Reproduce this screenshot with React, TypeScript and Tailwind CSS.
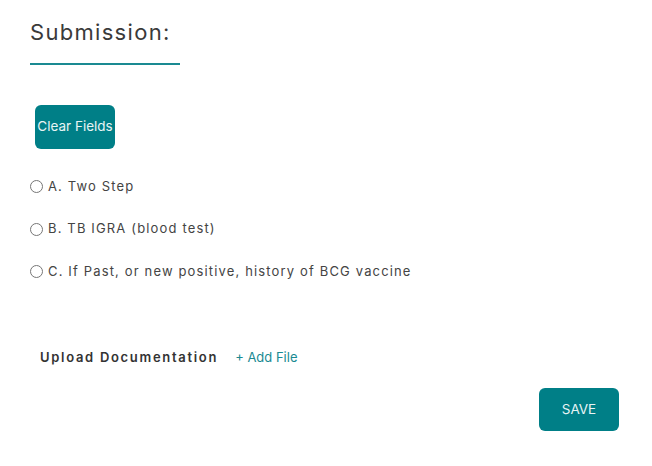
export default function App() {
  const options = [
    'A. Two Step',
    'B. TB IGRA (blood test)',
    'C. If Past, or new positive, history of BCG vaccine',
  ]
  return (
    <div
      className="h-[466px] w-[652px] bg-white pl-[30px] pt-[16px] text-[#333]"
      style={{ fontFamily: 'Inter, "Noto Sans", sans-serif' }}
    >
      <h2 className="text-[22px] leading-[32px] tracking-[1.3px] text-[#3a3a3a]">Submission:</h2>
      <div className="mt-[15px] h-[1.5px] w-[150px] bg-[#1a8a92]" />
      <button
        type="button"
        className="ml-[5px] mt-[40px] flex h-[44px] w-[80px] items-center justify-center rounded-[6px] bg-[#007f87] text-[13.5px] text-[#e8f4f5]"
      >
        Clear Fields
      </button>
      <div className="mt-[28px] flex flex-col gap-[22.5px]">
        {options.map((o) => (
          <label key={o} className="flex h-[20px] items-center gap-[5px] text-[13px] tracking-[1.15px] text-[#444]">
            <input type="radio" name="sub" className="h-[13px] w-[13px]" />
            <span>{o}</span>
          </label>
        ))}
      </div>
      <div className="ml-[10px] mt-[66px] flex items-center gap-[17px] text-[13px]">
        <span className="font-semibold tracking-[1.7px] text-[#333]">Upload Documentation</span>
        <span className="text-[#1a8a92]">+ Add File</span>
      </div>
      <div className="mt-[21px] flex pr-[33px] justify-end">
        <button
          type="button"
          className="flex h-[43px] w-[80px] items-center justify-center rounded-[6px] bg-[#007f87] text-[13.5px] text-[#e8f4f5]"
        >
          SAVE
        </button>
      </div>
    </div>
  )
}
